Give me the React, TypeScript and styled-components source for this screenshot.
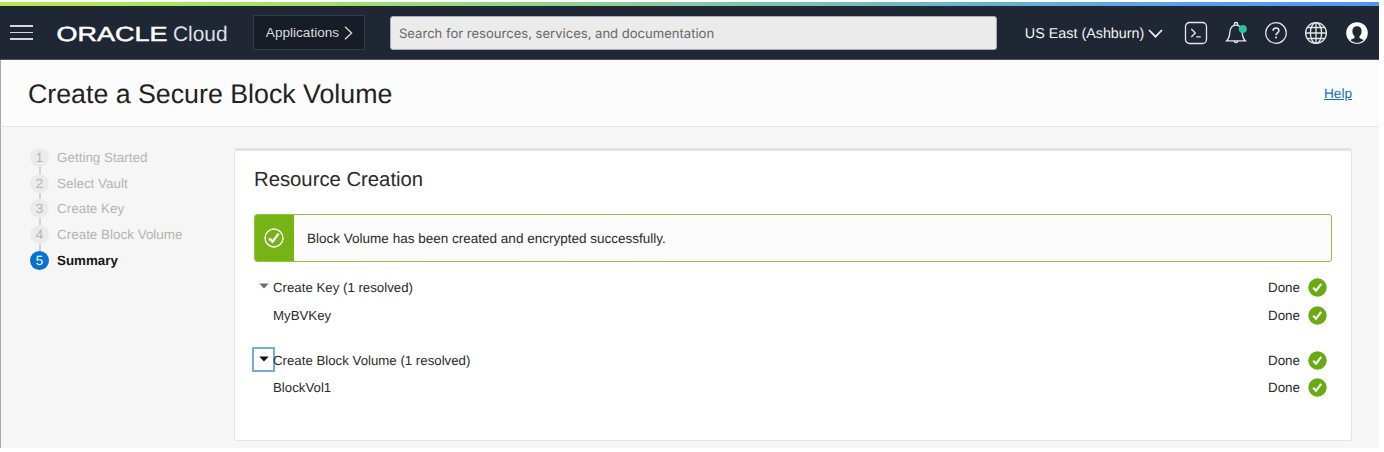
import React from "react";
import styled, { createGlobalStyle } from "styled-components";

const GlobalStyle = createGlobalStyle`
  *, *::before, *::after { box-sizing: border-box; }
  body {
    margin: 0;
    background: #fff;
    color: #2b2b2b;
    font-family: "Liberation Sans", Helvetica, Arial, sans-serif;
    text-rendering: geometricPrecision;
    overflow: hidden;
  }
`;

const Page = styled.div`
  display: flex;
  flex-direction: column;
  width: 1379px;
  height: 448px;
  padding-top: 2px;
`;

const Stripe = styled.div`
  flex: none;
  height: 4px;
  background: linear-gradient(90deg, #b5e853 0%, #a3df6c 22%, #8fd292 42%, #70b8c4 66%, #5aa0e8 86%, #4f97f5 100%);
`;

const Header = styled.header`
  flex: none;
  display: flex;
  align-items: center;
  height: 54px;
  padding-left: 10px;
  padding-right: 10.4px;
  background: #1e2733;
  border-bottom: 1px solid #4b525c;
  color: #f2f2f2;
`;

const MenuButton = styled.button`
  display: flex;
  flex-direction: column;
  gap: 5px;
  width: 23px;
  padding: 0;
  border: 0;
  background: none;
`;

const MenuLine = styled.span`
  height: 1.4px;
  background: #d5d7da;
`;

const Brand = styled.svg`
  display: block;
  margin-left: 22px;
`;

const AppsButton = styled.button`
  display: flex;
  align-items: center;
  justify-content: center;
  gap: 5px;
  width: 112px;
  height: 35px;
  margin-left: 23px;
  padding: 0 0 0 1px;
  border: 1px solid #343c47;
  background: #171c26;
  color: #d9dbdd;
  font: 13.6px "Liberation Sans", Arial, sans-serif;
`;

const SearchInput = styled.div`
  display: flex;
  align-items: center;
  width: 607px;
  height: 34px;
  margin-left: 25px;
  padding: 2px 0 0 8px;
  border: 1px solid #a9adb2;
  border-radius: 3px;
  background: #ebebeb;
  color: #686868;
  font: 13.06px Inter, sans-serif;
`;

const Region = styled.div`
  display: flex;
  align-items: center;
  gap: 4px;
  margin-left: auto;
  padding-top: 2px;
  font-size: 14.35px;
`;

const HeaderIcons = styled.div`
  display: flex;
  gap: 16.2px;
  margin-left: 20.5px;

  svg { display: block; }
`;

const TitleBar = styled.div`
  flex: none;
  display: flex;
  align-items: center;
  justify-content: space-between;
  height: 67px;
  padding: 2px 27px 0 27px;
  border-left: 1px solid #a8a8a8;
  border-bottom: 1px solid #e6e6e6;
  background: #fcfcfc;
`;

const Title = styled.h1`
  margin: 0;
  font-size: 26.75px;
  font-weight: 400;
  line-height: 32px;
  color: #222;
`;

const HelpLink = styled.a`
  font-size: 13.6px;
  line-height: 16px;
  color: #1272cc;
  text-decoration: underline;
`;

const Body = styled.main`
  flex: 1;
  display: flex;
  padding-left: 29px;
  border-left: 1px solid #a8a8a8;
  background: #f6f6f6;
`;

const Steps = styled.ol`
  width: 204px;
  margin: 0;
  padding: 20.8px 0 0;
  list-style: none;
`;

const Step = styled.li<{ $active?: boolean }>`
  display: flex;
  align-items: center;
  gap: 8px;
  height: 19px;
  font-size: ${(p) => (p.$active ? 13.35 : 13.45)}px;
  font-weight: ${(p) => (p.$active ? 700 : 400)};
  color: ${(p) => (p.$active ? "#161616" : "#b4b4b4")};
`;

const StepNumber = styled.span<{ $active?: boolean }>`
  display: grid;
  place-items: center;
  width: 19px;
  height: 19px;
  border-radius: 50%;
  font-weight: 400;
  background: ${(p) => (p.$active ? "#0572ce" : "#ebebeb")};
  color: ${(p) => (p.$active ? "#fff" : "#b4b4b4")};
`;

const StepLink = styled.li`
  width: 2px;
  height: 6.8px;
  margin-left: 9px;
  background: #d2d2d2;
`;

const Card = styled.section`
  width: 1118px;
  height: 293px;
  margin-top: 21px;
  padding: 17px 19px 0;
  border: 1px solid #e2e4e5;
  border-top: 3px solid #e1e3e5;
  border-radius: 3px;
  background: #fff;
`;

const CardTitle = styled.h2`
  margin: 0;
  font-size: 20.3px;
  font-weight: 400;
  line-height: 24px;
  color: #2b2b2b;
`;

const Notice = styled.div`
  display: flex;
  align-items: stretch;
  height: 48px;
  margin-top: 22px;
  border: 1px solid #8fc63f;
  border-radius: 3px;
  background: #fcfcfc;
  overflow: hidden;
`;

const NoticeIcon = styled.div`
  display: grid;
  place-items: center;
  width: 39px;
  padding-right: 1px;
  background: #76b314;
`;

const NoticeText = styled.div`
  display: flex;
  align-items: center;
  padding-left: 13px;
  font-size: 13.53px;
`;

const Group = styled.div<{ $gap: number }>`
  margin-top: ${(p) => p.$gap}px;
`;

const Row = styled.div`
  display: flex;
  align-items: center;
  height: 27.8px;
  padding-right: 5.5px;
  font-size: 13.25px;
`;

const Toggle = styled.span<{ $focused?: boolean }>`
  display: grid;
  place-items: center;
  width: 23px;
  height: 25px;
  margin-top: -2px;
  margin-left: -2px;
  margin-right: -2px;
  border: 2px solid ${(p) => (p.$focused ? "#75aae6" : "transparent")};
  color: ${(p) => (p.$focused ? "#111" : "#6e6e6e")};
`;

const Name = styled.span<{ $indent?: boolean }>`
  padding-left: ${(p) => (p.$indent ? 19 : 0)}px;
`;

const Status = styled.span`
  display: flex;
  align-items: center;
  gap: 7.5px;
  margin-left: auto;
  font-size: 13.4px;
`;

function Caret({ focused }: { focused?: boolean }) {
  return (
    <Toggle $focused={focused}>
      <svg width="10" height="6" viewBox="0 0 10 6">
        <path d="M0.3 0.5H9.7L5 5.5Z" fill="currentColor" />
      </svg>
    </Toggle>
  );
}

function Done() {
  return (
    <Status>
      Done
      <svg width="19" height="19" viewBox="0 0 19 19">
        <circle cx="9.5" cy="9.5" r="9.2" fill="#68ab14" />
        <path d="M5.2 9.8L8.1 12.6L13.2 5.9" fill="none" stroke="#fff" strokeWidth="2.1" />
      </svg>
    </Status>
  );
}

const steps = ["Getting Started", "Select Vault", "Create Key", "Create Block Volume", "Summary"];

const groups = [
  { title: "Create Key (1 resolved)", item: "MyBVKey", focused: false, gap: 11.6 },
  { title: "Create Block Volume (1 resolved)", item: "BlockVol1", focused: true, gap: 17 },
];

export default function App() {
  return (
    <>
      <GlobalStyle />
      <Page>
        <Stripe />
        <Header>
          <MenuButton aria-label="Menu">
            <MenuLine />
            <MenuLine />
            <MenuLine />
          </MenuButton>
          <Brand width="175" height="26" viewBox="0 0 175 26">
            <text x="1.5" y="20.5" textLength="111" lengthAdjust="spacingAndGlyphs" fontSize="20.5" fill="#fff" stroke="#fff" strokeWidth="0.5" fontFamily="Liberation Sans, sans-serif">ORACLE</text>
            <text x="118" y="20.8" textLength="54.5" lengthAdjust="spacingAndGlyphs" fontSize="21" fill="#dfe1e3" fontFamily="Liberation Sans, sans-serif">Cloud</text>
          </Brand>
          <AppsButton>
            Applications
            <svg width="9" height="14" viewBox="0 0 9 14" fill="none" stroke="currentColor" strokeWidth="1.3">
              <path d="M1 0.8L7.6 7L1 13.2" />
            </svg>
          </AppsButton>
          <SearchInput>Search for resources, services, and documentation</SearchInput>
          <Region>
            US East (Ashburn)
            <svg width="15" height="9" viewBox="0 0 15 9" fill="none" stroke="currentColor" strokeWidth="1.7">
              <path d="M1 1L7.5 7.7L14 1" />
            </svg>
          </Region>
          <HeaderIcons>
            <svg width="24" height="24" viewBox="0 0 24 24" fill="none" stroke="#e6e7e8" strokeWidth="1.3">
              <rect x="1.5" y="1.5" width="21" height="21" rx="4" />
              <path d="M7.3 8L11.3 12L7.3 16M12.2 15.8H16.8" />
            </svg>
            <svg width="24" height="24" viewBox="0 0 24 24" fill="none" stroke="#e6e7e8" strokeWidth="1.3">
              <path d="M2.6 19.8C4.6 18 5.4 15.8 5.8 11.6C6.2 6.5 8 4.2 12 4.2C16 4.2 17.8 6.5 18.2 11.6C18.6 15.8 19.4 18 21.4 19.8Z" />
              <path d="M10.3 4.2V3.2A1.7 1.7 0 0 1 13.7 3.2V4.2M10 20A2.1 2.3 0 0 0 14 20" />
              <circle cx="18.8" cy="8" r="4" fill="#2dbf9f" stroke="none" />
            </svg>
            <svg width="24" height="24" viewBox="0 0 24 24" fill="none" stroke="#e6e7e8" strokeWidth="1.2">
              <circle cx="12" cy="12" r="10.3" />
              <path d="M9.1 9.7C9.1 8 10.3 7 12 7C13.7 7 14.9 8 14.9 9.6C14.9 11.8 12 11.8 12 14.2" strokeWidth="1.6" />
              <circle cx="12" cy="16.6" r="1" fill="#e6e7e8" stroke="none" />
            </svg>
            <svg width="24" height="24" viewBox="0 0 24 24" fill="none" stroke="#e6e7e8" strokeWidth="1.3">
              <circle cx="12" cy="12" r="10.4" />
              <ellipse cx="12" cy="12" rx="5.6" ry="10.4" />
              <path d="M12 1.6V22.4M1.6 12H22.4M3.2 6.5H20.8M3.2 17.5H20.8" />
            </svg>
            <svg width="24" height="24" viewBox="0 0 24 24">
              <circle cx="12" cy="12" r="10.8" fill="#fff" />
              <path d="M12 5.2C14.9 5.2 16.6 7.1 16.6 10C16.6 12.4 15.8 14.2 14.5 15.3V17C15.5 17.8 17.5 18 18.7 19C16.8 20.9 14.6 21.8 12 21.8C9.4 21.8 7.2 20.9 5.3 19C6.5 18 8.5 17.8 9.5 17V15.3C8.2 14.2 7.4 12.4 7.4 10C7.4 7.1 9.1 5.2 12 5.2Z" fill="#1e2733" />
            </svg>
          </HeaderIcons>
        </Header>
        <TitleBar>
          <Title>Create a Secure Block Volume</Title>
          <HelpLink>Help</HelpLink>
        </TitleBar>
        <Body>
          <Steps>
            {steps.map((label, i) => {
              const active = i === steps.length - 1;
              return (
                <React.Fragment key={label}>
                  {i > 0 && <StepLink aria-hidden />}
                  <Step $active={active}>
                    <StepNumber $active={active}>{i + 1}</StepNumber>
                    {label}
                  </Step>
                </React.Fragment>
              );
            })}
          </Steps>
          <Card>
            <CardTitle>Resource Creation</CardTitle>
            <Notice>
              <NoticeIcon>
                <svg width="20" height="20" viewBox="0 0 20 20" fill="none" stroke="#fff">
                  <circle cx="10" cy="10" r="9" strokeWidth="1.4" />
                  <path d="M5 10.4L8.6 13.7L14.6 5.6" strokeWidth="2.4" />
                </svg>
              </NoticeIcon>
              <NoticeText>Block Volume has been created and encrypted successfully.</NoticeText>
            </Notice>
            {groups.map((g) => (
              <Group key={g.title} $gap={g.gap}>
                <Row>
                  <Caret focused={g.focused} />
                  <Name>{g.title}</Name>
                  <Done />
                </Row>
                <Row>
                  <Name $indent>{g.item}</Name>
                  <Done />
                </Row>
              </Group>
            ))}
          </Card>
        </Body>
      </Page>
    </>
  );
}
